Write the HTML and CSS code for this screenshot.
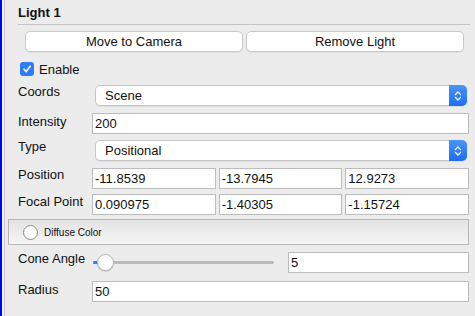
FILE: index.html
```html
<!DOCTYPE html>
<html lang="en">
    <head>
        <meta charset="UTF-8" />
        <meta name="viewport" content="width=device-width, initial-scale=1.0" />
        <title>Light 1</title>
        <link rel="stylesheet" href="styles.css">
    </head>
    <body>
        <div class="frame">
            <div class="panel">
                <h2 class="title">Light 1</h2>

                <div class="buttons">
                    <button class="btn">Move to Camera</button>
                    <button class="btn">Remove Light</button>
                </div>

                <label class="check">
                    <span class="box">
                        <svg width="10" height="10" viewBox="0 0 10 10"><path d="M2 5.2 L4.2 7.6 L8.2 2.2" fill="none" stroke="#fff" stroke-width="1.6" stroke-linecap="round" stroke-linejoin="round"/></svg>
                    </span>
                    Enable
                </label>

                <div class="row row-coords">
                    <span class="lbl">Coords</span>
                    <div class="select">
                        <span>Scene</span>
                        <span class="arrows">
                            <svg width="10" height="14" viewBox="0 0 10 14"><path d="M2.5 5.5 L5 3 L7.5 5.5 M2.5 8.5 L5 11 L7.5 8.5" fill="none" stroke="#fff" stroke-width="1.3" stroke-linecap="round" stroke-linejoin="round"/></svg>
                        </span>
                    </div>
                </div>

                <div class="row row-intensity">
                    <span class="lbl">Intensity</span>
                    <div class="field">200</div>
                </div>

                <div class="row row-type">
                    <span class="lbl">Type</span>
                    <div class="select">
                        <span>Positional</span>
                        <span class="arrows">
                            <svg width="10" height="14" viewBox="0 0 10 14"><path d="M2.5 5.5 L5 3 L7.5 5.5 M2.5 8.5 L5 11 L7.5 8.5" fill="none" stroke="#fff" stroke-width="1.3" stroke-linecap="round" stroke-linejoin="round"/></svg>
                        </span>
                    </div>
                </div>

                <div class="row row-position">
                    <span class="lbl">Position</span>
                    <div class="triple">
                        <div class="field">-11.8539</div>
                        <div class="field">-13.7945</div>
                        <div class="field">12.9273</div>
                    </div>
                </div>

                <div class="row row-focal">
                    <span class="lbl">Focal Point</span>
                    <div class="triple">
                        <div class="field">0.090975</div>
                        <div class="field">-1.40305</div>
                        <div class="field">-1.15724</div>
                    </div>
                </div>

                <div class="group">
                    <span class="radio"></span>
                    <span class="group-text">Diffuse Color</span>
                </div>

                <div class="row row-cone">
                    <span class="lbl">Cone Angle</span>
                    <div class="cone">
                        <div class="slider">
                            <span class="fill"></span>
                            <span class="thumb"></span>
                        </div>
                        <div class="field">5</div>
                    </div>
                </div>

                <div class="row row-radius">
                    <span class="lbl">Radius</span>
                    <div class="field">50</div>
                </div>
            </div>
        </div>
    </body>
</html>
```
FILE: styles.css
```css
body {
    margin: 0;
    font-family: "Liberation Sans", Arial, sans-serif;
    font-size: 13px;
    color: #111;
    background: #ececec;
}
.frame {
    height: 316px;
    border-left: 2px solid #0000ff;
    background: #f4f4f4;
    padding-left: 2px;
}
.panel {
    height: 316px;
    box-sizing: border-box;
    border-left: 1px solid #c6c6c6;
    background: #ececec;
    padding: 0 6px 0 3px;
}
.title {
    margin: 0 -1px 0 10px;
    padding-top: 6px;
    height: 18px;
    font-size: 13px;
    font-weight: bold;
    line-height: 14px;
    border-bottom: 1px solid #c4c4c4;
}
.buttons {
    display: grid;
    grid-template-columns: 1fr 1fr;
    gap: 3px;
    margin: 6px 5px 0 17px;
}
.btn {
    height: 21px;
    background: #fff;
    border: 1px solid #c9c9c9;
    border-radius: 5px;
    font-family: inherit;
    font-size: 13px;
    color: #111;
    padding: 0;
    box-shadow: 0 1px 0 rgba(0, 0, 0, 0.05);
}
.check {
    display: flex;
    align-items: center;
    gap: 5px;
    margin: 10px 0 0 12px;
    height: 14px;
}
.box {
    width: 14px;
    height: 14px;
    border-radius: 3px;
    background: #2e7cf6;
    display: flex;
    align-items: center;
    justify-content: center;
}
.row {
    display: grid;
    grid-template-columns: 74px 1fr;
    align-items: start;
    margin-left: 10px;
    height: 21px;
}
.lbl {
    line-height: 14px;
    white-space: nowrap;
}
.row-coords { margin-top: 9px; }
.row-intensity { margin-top: 7px; }
.row-intensity .lbl { padding-top: 2px; }
.row-type { margin-top: 6px; }
.row-position { margin-top: 7px; }
.row-focal { margin-top: 5px; }
.row-focal .lbl { padding-top: 1px; }
.row-cone { margin-top: 7px; }
.row-radius { margin-top: 8px; }
.row-radius .lbl { padding-top: 2px; }
.field {
    height: 21px;
    box-sizing: border-box;
    background: #fff;
    border: 1px solid #bcbcbc;
    padding-left: 2px;
    line-height: 19px;
}
.select {
    height: 21px;
    box-sizing: border-box;
    margin: 0 2px 0 3px;
    display: flex;
    justify-content: space-between;
    background: #fff;
    border: 1px solid #c6c6c6;
    border-radius: 5px;
    padding-left: 9px;
    line-height: 19px;
    box-shadow: 0 1px 0 rgba(0, 0, 0, 0.06);
}
.arrows {
    width: 18px;
    margin: -1px -1px -1px 0;
    border-radius: 0 5px 5px 0;
    background: linear-gradient(#4b94f8, #1d6df2);
    display: flex;
    align-items: center;
    justify-content: center;
}
.triple {
    display: grid;
    grid-template-columns: 1fr 1fr 1fr;
    gap: 3px;
}
.group {
    margin-top: 4px;
    height: 26px;
    box-sizing: border-box;
    border: 1px solid #b6b6b6;
    background: linear-gradient(#e3e3e3, #f5f5f5);
    display: flex;
    align-items: center;
    padding-left: 14px;
    gap: 6px;
}
.radio {
    width: 13px;
    height: 13px;
    border-radius: 50%;
    background: #fff;
    border: 1px solid #8a8a8a;
}
.group-text {
    font-size: 10px;
}
.cone {
    display: grid;
    grid-template-columns: 181px 1fr;
    column-gap: 14px;
    margin-left: 1px;
}
.slider {
    position: relative;
    height: 21px;
}
.slider::before {
    content: "";
    position: absolute;
    left: 0;
    right: 0;
    top: 9px;
    height: 3px;
    border-radius: 2px;
    background: #b9b9b9;
}
.fill {
    position: absolute;
    left: 0;
    top: 9px;
    width: 8px;
    height: 3px;
    border-radius: 2px;
    background: #2f7ef6;
}
.thumb {
    position: absolute;
    left: 4px;
    top: 2px;
    width: 15px;
    height: 15px;
    border-radius: 50%;
    background: #fff;
    border: 1px solid #b3b3b3;
    box-shadow: 0 1px 1px rgba(0, 0, 0, 0.15);
}
```
